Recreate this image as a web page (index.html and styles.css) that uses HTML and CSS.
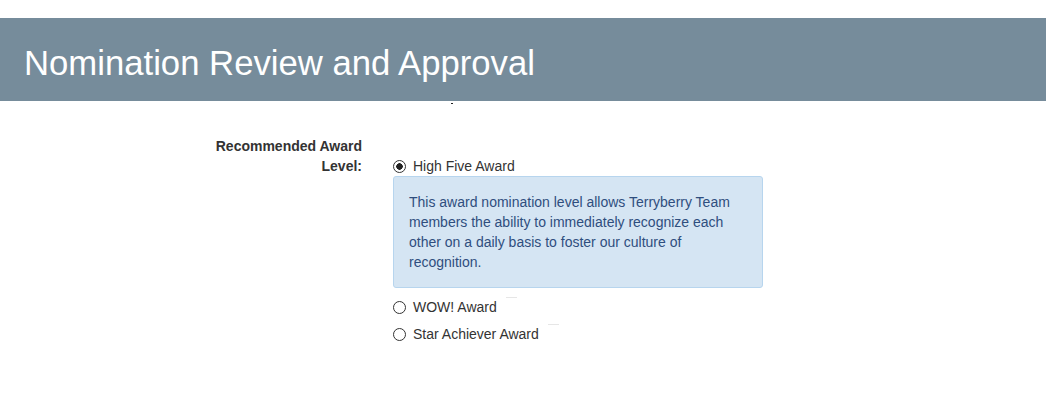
FILE: index.html
```html
<!DOCTYPE html>
<html lang="en">
<head>
	<meta charset="utf-8">
	<title>Nomination Review and Approval</title>
	<link rel="stylesheet" href="styles.css">
</head>
<body>
	<div class="page-header">
		<h1>Nomination Review and Approval</h1>
	</div>
	<div class="speck"></div>
	<form class="form-row">
		<label class="control-label">Recommended Award Level:</label>
		<div class="award-list">
			<label class="radio">
				<input type="radio" name="level" checked> High Five Award
			</label>
			<div class="alert-info">
				This award nomination level allows Terryberry Team members the ability to immediately recognize each other on a daily basis to foster our culture of recognition.
			</div>
			<label class="radio">
				<input type="radio" name="level"> WOW! Award<span class="tip"></span>
			</label>
			<label class="radio">
				<input type="radio" name="level"> Star Achiever Award<span class="tip"></span>
			</label>
		</div>
	</form>
</body>
</html>
```

FILE: styles.css
```css
body {
	margin: 0;
	background: #fff;
	font-family: 'Liberation Sans', Arial, sans-serif;
	font-size: 14px;
	line-height: 20px;
	color: #333;
}
.page-header {
	margin-top: 18px;
	height: 83px;
	box-sizing: border-box;
	background: #768c9b;
	display: flex;
	align-items: center;
	padding: 6px 0 0 24px;
}
.page-header h1 {
	margin: 0;
	color: #fff;
	font-weight: normal;
	font-size: 34.7px;
	line-height: 40px;
}
.speck {
	margin: 2px 0 0 451px;
	width: 2px;
	height: 1px;
	background: #222;
}
.form-row {
	display: flex;
	margin-top: 32px;
}
.control-label {
	width: 362px;
	text-align: right;
	font-weight: bold;
	padding-left: 200px;
	box-sizing: border-box;
}
.award-list {
	margin-left: 31px;
	margin-top: 20px;
	display: flex;
	flex-direction: column;
}
.radio {
	display: flex;
	align-items: center;
	height: 20px;
}
.radio input {
	appearance: none;
	-webkit-appearance: none;
	box-sizing: border-box;
	margin: 0 7px 0 0;
	width: 13px;
	height: 13px;
	border: 1px solid #333;
	border-radius: 50%;
	background: #fff;
}
.radio input:checked {
	background: radial-gradient(circle, #222 0, #222 3px, #fff 3.5px);
}
.radio + .radio {
	margin-top: 7px;
}
.alert-info {
	width: 370px;
	box-sizing: border-box;
	padding: 15px;
	margin-bottom: 9px;
	background: #d5e5f3;
	border: 1px solid #b7d5ee;
	border-radius: 3px;
	color: #2f4e7e;
}
.tip {
	align-self: flex-start;
	width: 11px;
	height: 1px;
	margin-left: 9px;
	background: #e6e6e6;
}
```
